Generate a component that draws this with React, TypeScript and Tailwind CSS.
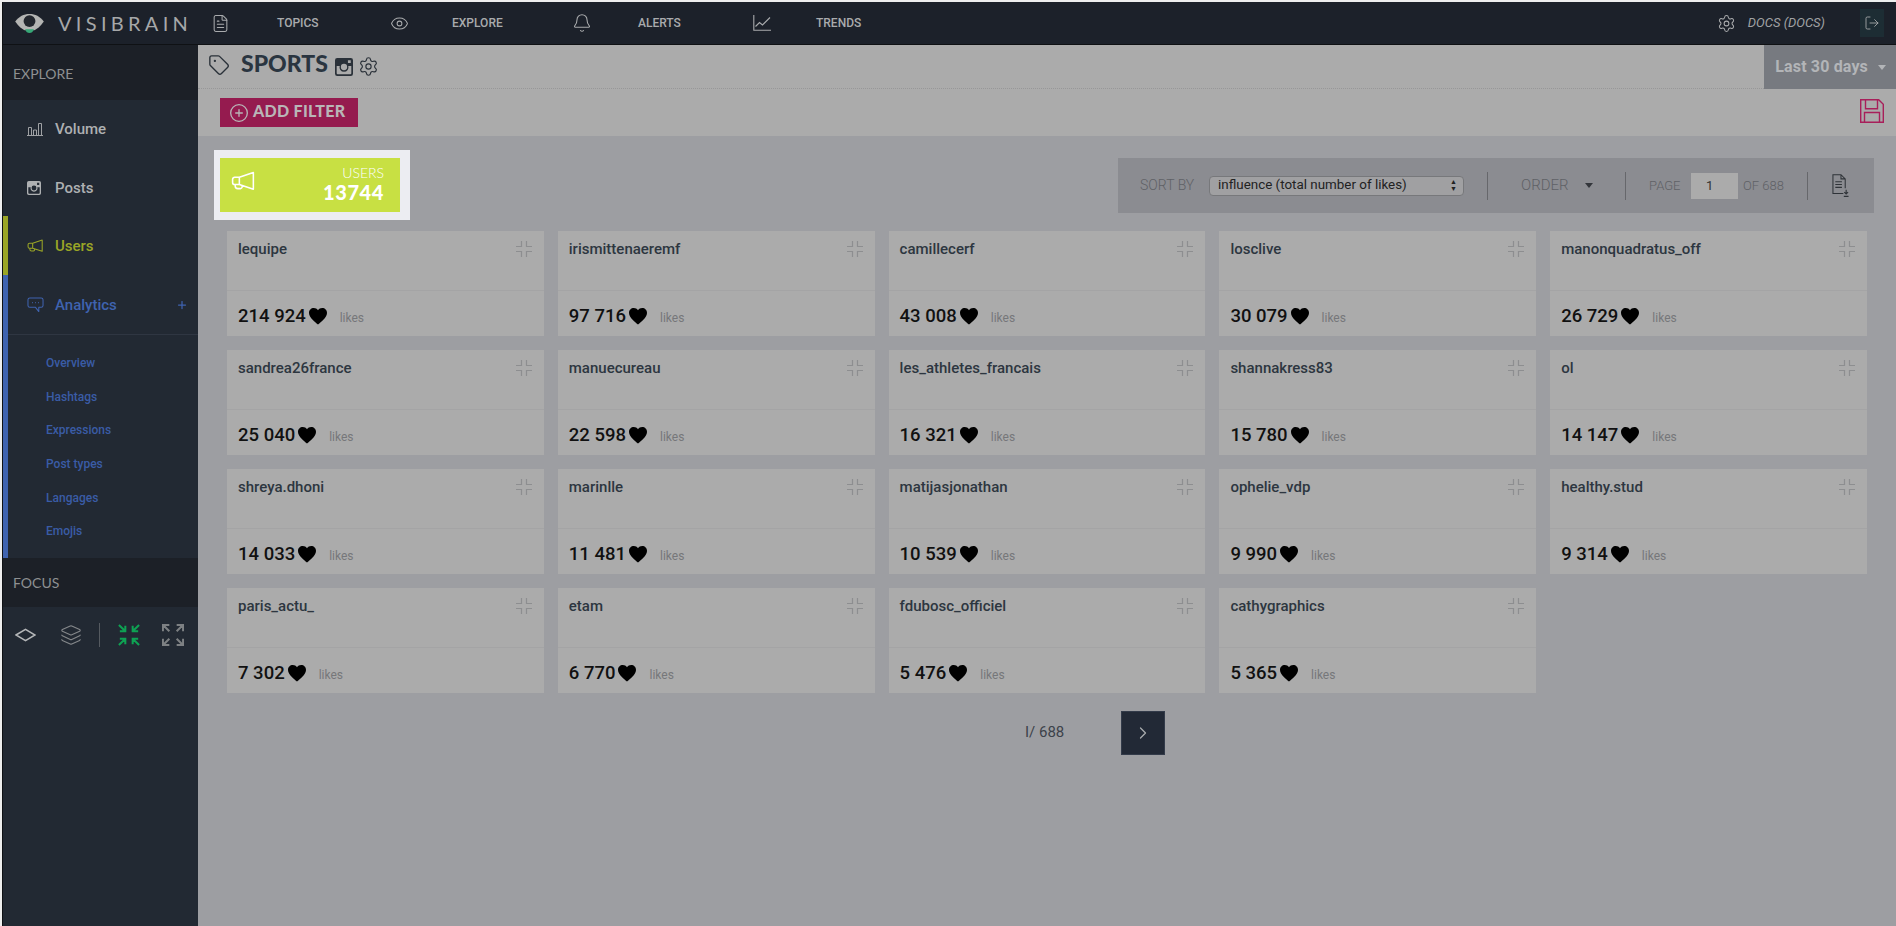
import React from "react";
import { FileText, Eye, Bell, Settings, LogOut, Tag, Plus, Layers, ChevronRight, CirclePlus } from "lucide-react";

const users: [string, string][] = [
  ["lequipe", "214 924"], ["irismittenaeremf", "97 716"], ["camillecerf", "43 008"], ["losclive", "30 079"], ["manonquadratus_off", "26 729"],
  ["sandrea26france", "25 040"], ["manuecureau", "22 598"], ["les_athletes_francais", "16 321"], ["shannakress83", "15 780"], ["ol", "14 147"],
  ["shreya.dhoni", "14 033"], ["marinlle", "11 481"], ["matijasjonathan", "10 539"], ["ophelie_vdp", "9 990"], ["healthy.stud", "9 314"],
  ["paris_actu_", "7 302"], ["etam", "6 770"], ["fdubosc_officiel", "5 476"], ["cathygraphics", "5 365"],
];

function Compress({ className = "" }: { className?: string }) {
  return (
    <svg viewBox="0 0 18 18" width="18" height="18" fill="none" stroke="currentColor" strokeWidth="1.2" className={className}>
      <path d="M1 6.500h5.500V1M11.500 1v5.500H17M1 11.500h5.500V17M11.500 17v-5.500H17" />
    </svg>
  );
}

function Arrows({ inward, className = "" }: { inward: boolean; className?: string }) {
  return (
    <svg viewBox="0 0 24 24" width="22" height="22" fill="none" stroke="currentColor" strokeWidth="2.200" className={className}>
      {inward ? (
        <path d="M1 1l7 7M8 2v6H2M23 1l-7 7M16 2v6h6M1 23l7-7M8 22v-6H2M23 23l-7-7M16 22v-6h6" />
      ) : (
        <path d="M8 8L2 2M1 8V1h7M16 8l6-6M23 8V1h-7M8 16l-6 6M1 16v7h7M16 16l6 6M23 16v7h-7" />
      )}
    </svg>
  );
}

function Heart() {
  return (
    <svg viewBox="0 0 24 22" width="18" height="16.500" fill="#000">
      <path d="M12 22C9 19 0 13 0 6.500 0 2.800 2.800 0 6.400 0 8.700 0 10.800 1.100 12 3 13.200 1.100 15.300 0 17.600 0 21.200 0 24 2.800 24 6.500 24 13 15 19 12 22z" />
    </svg>
  );
}

function Logo() {
  return (
    <svg viewBox="0 0 30 22" width="29" height="21">
      <path d="M0 9C4 3.500 9 1 15 1s11 2.500 15 8c-4 5.500-7 8-10 9h-10C7 17 4 14.500 0 9z" fill="#b4b5b3" />
      <circle cx="15" cy="8.500" r="6.200" fill="#23272e" />
      <path d="M10.500 17h9c-.8 3-2.500 4-4.500 4s-3.700-1-4.500-4z" fill="#37a877" />
    </svg>
  );
}

function BarsIcon({ className = "" }: { className?: string }) {
  return (
    <svg viewBox="0 0 16 14" width="16" height="14" fill="none" stroke="currentColor" strokeWidth="1" className={className}>
      <path d="M1.500 13V5.500h3V13M6.500 13V8h3v5M11.500 13V1.500h3V13M0 13.500h16" />
    </svg>
  );
}

function InstaFilled({ size, className = "" }: { size: number; className?: string }) {
  return (
    <svg viewBox="0 0 16 16" width={size} height={size} className={className}>
      <path fillRule="evenodd" fill="currentColor" d="M2 0h12a2 2 0 0 1 2 2v12a2 2 0 0 1-2 2H2a2 2 0 0 1-2-2V2a2 2 0 0 1 2-2zM1.500 7v6.500a1 1 0 0 0 1 1h11a1 1 0 0 0 1-1V7h-2.700a4 4 0 1 1-7.600 0zM8 5.200a2.800 2.800 0 1 0 0 5.600 2.800 2.800 0 0 0 0-5.600zM11.500 2v2.500H14V2z" />
    </svg>
  );
}

function Horn({ size, className = "" }: { size: number; className?: string }) {
  return (
    <svg viewBox="0 0 24 20" width={size} height={size * 0.83} fill="none" stroke="currentColor" strokeWidth="1.500" strokeLinejoin="round" className={className}>
      <path d="M21.500 1.500v16L8 13H3.500a2 2 0 0 1-2-2V8a2 2 0 0 1 2-2H8zM8 6v7M4 13v1.500a2.500 2.500 0 0 0 2.500 2.500H9a2 2 0 0 0 1.500-3" />
    </svg>
  );
}

function Chat({ className = "" }: { className?: string }) {
  return (
    <svg viewBox="0 0 18 17" width="17" height="16" fill="none" stroke="currentColor" strokeWidth="1.100" strokeLinejoin="round" className={className}>
      <path d="M3 1h12a2 2 0 0 1 2 2v6a2 2 0 0 1-2 2h-2.500v4.500L9 11H3a2 2 0 0 1-2-2V3a2 2 0 0 1 2-2z" />
      <path d="M5.500 6h.8M8.600 6h.8M11.700 6h.8" strokeWidth="1.300" />
    </svg>
  );
}

function Trend({ className = "" }: { className?: string }) {
  return (
    <svg viewBox="0 0 18 16" width="18" height="16" fill="none" stroke="currentColor" strokeWidth="1.100" className={className}>
      <path d="M.8 0v15.200H18M2.500 11.500l4-4 3 2.500L17 2.500" />
    </svg>
  );
}

function Floppy({ className = "" }: { className?: string }) {
  return (
    <svg viewBox="0 0 24 24" width="24" height="24" fill="none" stroke="currentColor" strokeWidth="1.400" className={className}>
      <path d="M.7.700h18l4.600 4.600v18H.7zM5.500.700v9h12v-9M4.500 23.300V13.500h15v9.800" />
    </svg>
  );
}

function DocDown({ className = "" }: { className?: string }) {
  return (
    <svg viewBox="0 0 18 24" width="17" height="23" fill="none" stroke="currentColor" strokeWidth="1.100" className={className}>
      <path d="M12 20.500H1V.6h8.500L14 5v10M9.500.6V5H14M3.500 8h7M3.500 11h7M3.500 14h7" />
      <path d="M15 16.500v4M13 19l2 2 2-2M12.500 23.500h5" strokeWidth="1.200" />
    </svg>
  );
}

function TopItem({ icon, label, w, gap }: { icon: React.ReactNode; label: string; w: string; gap: string }) {
  return (
    <div className={`flex items-center ${w}`}>
      <div className={`flex ${gap}`}>{icon}</div>
      <span className="text-[12px] font-medium text-[#a9abad]">{label}</span>
    </div>
  );
}

function NavItem({ icon, label, color, right }: { icon: React.ReactNode; label: string; color: string; right?: React.ReactNode }) {
  return (
    <div className={`h-[58.500px] flex items-center pl-[19px] pr-[10px] text-[15px] font-medium ${color}`}>
      <div className="w-[28px]">{icon}</div>
      <span className="flex-1">{label}</span>
      {right}
    </div>
  );
}

function Card({ name, likes }: { name: string; likes: string }) {
  return (
    <div className="h-[105px] bg-[#ababab] flex flex-col">
      <div className="h-[60px] shrink-0 flex justify-between border-b border-[#a4a4a5] pl-[11px] pr-[11px] pt-[9px]">
        <span className="text-[15px] font-medium text-[#2d3640] leading-[18px]">{name}</span>
        <Compress className="text-[#8d8e90]" />
      </div>
      <div className="flex-1 flex items-center pl-[11px] pt-[6px]">
        <span className="text-[18.500px] font-medium text-[#111]">{likes}</span>
        <span className="ml-[3px]"><Heart /></span>
        <span className="ml-[13px] mt-[2px] text-[12px] text-[#76777a]">likes</span>
      </div>
    </div>
  );
}

export default function App() {
  return (
    <div className="w-[1896px] h-[926px] overflow-hidden bg-[#eeeeee] pt-[2px] pl-[2px] flex flex-col font-['Roboto',sans-serif]">
      <div className="flex-1 min-h-0 border-l border-[#0f1114] flex flex-col">
        <header className="h-[43px] shrink-0 bg-[#1c212a] border-b border-[#0f1114] flex items-center pl-[12px] pr-[12px]">
          <Logo />
          <span className="ml-[14px] w-[153px] text-[20px] text-[#a6a8a9] tracking-[4.300px] font-['Lato',sans-serif]">VISIBRAIN</span>
          <TopItem w="w-[179px]" gap="w-[66px]" icon={<FileText size={19} strokeWidth={1.300} className="text-[#a9abad]" />} label="TOPICS" />
          <TopItem w="w-[182px]" gap="w-[62px]" icon={<Eye size={19} strokeWidth={1.300} className="text-[#a9abad]" />} label="EXPLORE" />
          <TopItem w="w-[181px]" gap="w-[66px]" icon={<Bell size={20} strokeWidth={1.300} className="text-[#a9abad]" />} label="ALERTS" />
          <TopItem w="w-[150px]" gap="w-[63px]" icon={<Trend className="text-[#a9abad]" />} label="TRENDS" />
          <div className="flex-1" />
          <Settings size={19} strokeWidth={1.300} className="text-[#a9abad]" />
          <span className="ml-[12px] text-[13px] italic text-[#a0a2a4]">DOCS (DOCS)</span>
          <div className="ml-[35px] w-[24px] h-[28px] bg-[#1d2d34] flex items-center justify-center">
            <LogOut size={16} strokeWidth={1.300} className="text-[#a9abad]" />
          </div>
        </header>
        <div className="flex-1 min-h-0 flex">
          <aside className="w-[195px] shrink-0 bg-[#222933] flex flex-col">
            <div className="h-[55px] bg-[#1c2027] flex items-center pl-[10px] pt-[2px] text-[14px] text-[#8e9092] font-['Lato',sans-serif]">EXPLORE</div>
            <div className="flex">
              <div className="w-[5px] shrink-0 flex flex-col pt-[116px]">
                <div className="h-[59px] bg-[#9aa526]" />
                <div className="h-[283px] bg-[#3f63b0]" />
              </div>
              <div className="flex-1 min-w-0">
                <NavItem icon={<BarsIcon className="text-[#9fa1a4]" />} label="Volume" color="text-[#aeb0b2]" />
                <NavItem icon={<InstaFilled size={14} className="text-[#aeb0b2]" />} label="Posts" color="text-[#aeb0b2]" />
                <NavItem icon={<Horn size={17} className="text-[#9aa526]" />} label="Users" color="text-[#9aa526]" />
                <NavItem icon={<Chat className="text-[#3f63b0]" />} label="Analytics" color="text-[#3f63b0]" right={<Plus size={12} strokeWidth={2.500} className="text-[#3f63b0]" />} />
                <div className="border-t border-[#2f3642] pt-[11px] pb-[6px]">
                  {["Overview", "Hashtags", "Expressions", "Post types", "Langages", "Emojis"].map((s) => (
                    <div key={s} className="h-[33.700px] flex items-center pl-[38px] text-[12px] font-medium text-[#3a5ca6]">{s}</div>
                  ))}
                </div>
              </div>
            </div>
            <div className="h-[49px] bg-[#1c2027] flex items-center pl-[10px] text-[14px] text-[#8e9092] font-['Lato',sans-serif]">FOCUS</div>
            <div className="flex items-center pl-[12px] pt-[6px] h-[50px]">
              <svg viewBox="0 0 22 14" width="21" height="14" fill="none" stroke="#b5b7b9" strokeWidth="1.600"><path d="M1 7l10-6 10 6-10 6z" /></svg>
              <Layers size={22} strokeWidth={1.200} className="ml-[24px] text-[#85888b]" />
              <div className="ml-[17px] w-[1px] h-[24px] bg-[#555a60]" />
              <Arrows inward className="ml-[18px] text-[#0ea253]" />
              <Arrows inward={false} className="ml-[22px] text-[#7d8083]" />
            </div>
          </aside>
          <main className="flex-1 min-w-0 bg-[#9d9ea2] flex flex-col">
            <div className="h-[44px] bg-[#ababab] border-b border-dotted border-[#979798] flex items-start relative">
              <Tag size={22} strokeWidth={1.500} className="ml-[10px] mt-[9px] text-[#2a3139]" />
              <span className="ml-[11px] mt-[4px] text-[23px] leading-[28px] font-black text-[#2a3540] font-['Lato',sans-serif]">SPORTS</span>
              <InstaFilled size={18} className="ml-[7px] mt-[13px] text-[#2a3139]" />
              <Settings size={21} strokeWidth={1.300} className="ml-[5px] mt-[11px] text-[#2a3139]" />
              <div className="absolute right-0 top-0 h-[44px] w-[132px] bg-[#777a80] flex items-center justify-end pr-[10px] gap-[10px]">
                <span className="text-[16px] font-bold text-[#b3b5b8] tracking-[0.15px]">Last 30 days</span>
                <span className="w-0 h-0 border-l-[4px] border-r-[4px] border-t-[5px] border-l-transparent border-r-transparent border-t-[#b3b5b8]" />
              </div>
            </div>
            <div className="h-[47px] bg-[#ababab] flex items-start justify-between pl-[22px] pr-[12px] pt-[10px]">
              <div className="h-[29px] w-[138px] bg-[#951b4f] flex items-center pl-[9px] gap-[4px] -mt-[1px]">
                <CirclePlus size={20} strokeWidth={1.600} className="text-[#b9b5b7]" />
                <span className="text-[16px] leading-[20px] -mt-[3px] font-black text-[#b9b5b7] font-['Lato',sans-serif] tracking-[0.3px]">ADD FILTER</span>
              </div>
              <Floppy className="text-[#a81f5a]" />
            </div>
            <div className="flex items-start justify-between pl-[16px] pr-[22px] pt-[14px]">
              <div className="py-[8px] pl-[6px] pr-[10px] bg-[#ecedf2] w-[196px] h-[70px]">
                <div className="h-full bg-[#c8e043] flex justify-between pl-[11px] pr-[16px] pt-[7px] text-white">
                  <Horn size={25} className="mt-[6px]" />
                  <div className="flex flex-col items-end">
                    <span className="text-[14px] leading-[16px] font-light font-['Lato',sans-serif]">USERS</span>
                    <span className="text-[20px] leading-[22px] font-black tracking-[0.6px] font-['Lato',sans-serif]">13744</span>
                  </div>
                </div>
              </div>
              <div className="mt-[8px] w-[756px] h-[55px] bg-[#8b8c91] flex items-center pl-[22px] text-[14px] font-light text-[#5f6166]">
                <span className="w-[55px] whitespace-nowrap">SORT BY</span>
                <div className="ml-[14px] w-[255px] h-[20px] rounded-[4px] bg-[#a0a0a2] border border-[#77787b] text-[13.400px] font-normal text-[#222] flex items-center justify-between pl-[8px] pr-[6px]">
                  <span className="whitespace-nowrap">influence (total number of likes)</span>
                  <span className="text-[7px] leading-[7px] flex flex-col"><span>▲</span><span>▼</span></span>
                </div>
                <div className="ml-[23px] w-[1px] h-[28px] bg-[#66676b]" />
                <span className="ml-[33px] w-[49px] text-[15px]">ORDER</span>
                <span className="ml-[15px] w-0 h-0 border-l-[4px] border-r-[4px] border-t-[5px] border-l-transparent border-r-transparent border-t-[#33363b]" />
                <div className="ml-[32px] w-[1px] h-[28px] bg-[#66676b]" />
                <span className="ml-[23px] w-[32px] text-[13px]">PAGE</span>
                <div className="ml-[10px] w-[47px] h-[26px] bg-[#ababab] flex items-center pl-[15px] text-[13px] font-normal text-[#333]">1</div>
                <span className="ml-[5px] w-[41px] whitespace-nowrap text-[13px]">OF 688</span>
                <div className="ml-[23px] w-[1px] h-[28px] bg-[#66676b]" />
                <DocDown className="ml-[24px] text-[#2f3338]" />
              </div>
            </div>
            <div className="grid grid-cols-5 gap-x-[14px] gap-y-[14px] pl-[29px] pr-[29px] pt-[11px]">
              {users.map(([n, l]) => <Card key={n} name={n} likes={l} />)}
            </div>
            <div className="flex items-start pl-[827px] pt-[18px]">
              <span className="mt-[10px] w-[96px] text-[15px] text-[#3c424a]">I/ 688</span>
              <div className="w-[44px] h-[44px] bg-[#222936] border border-[#333b4a] flex items-center justify-center">
                <ChevronRight size={20} strokeWidth={1.500} className="text-[#a9abad]" />
              </div>
            </div>
          </main>
        </div>
      </div>
    </div>
  );
}
